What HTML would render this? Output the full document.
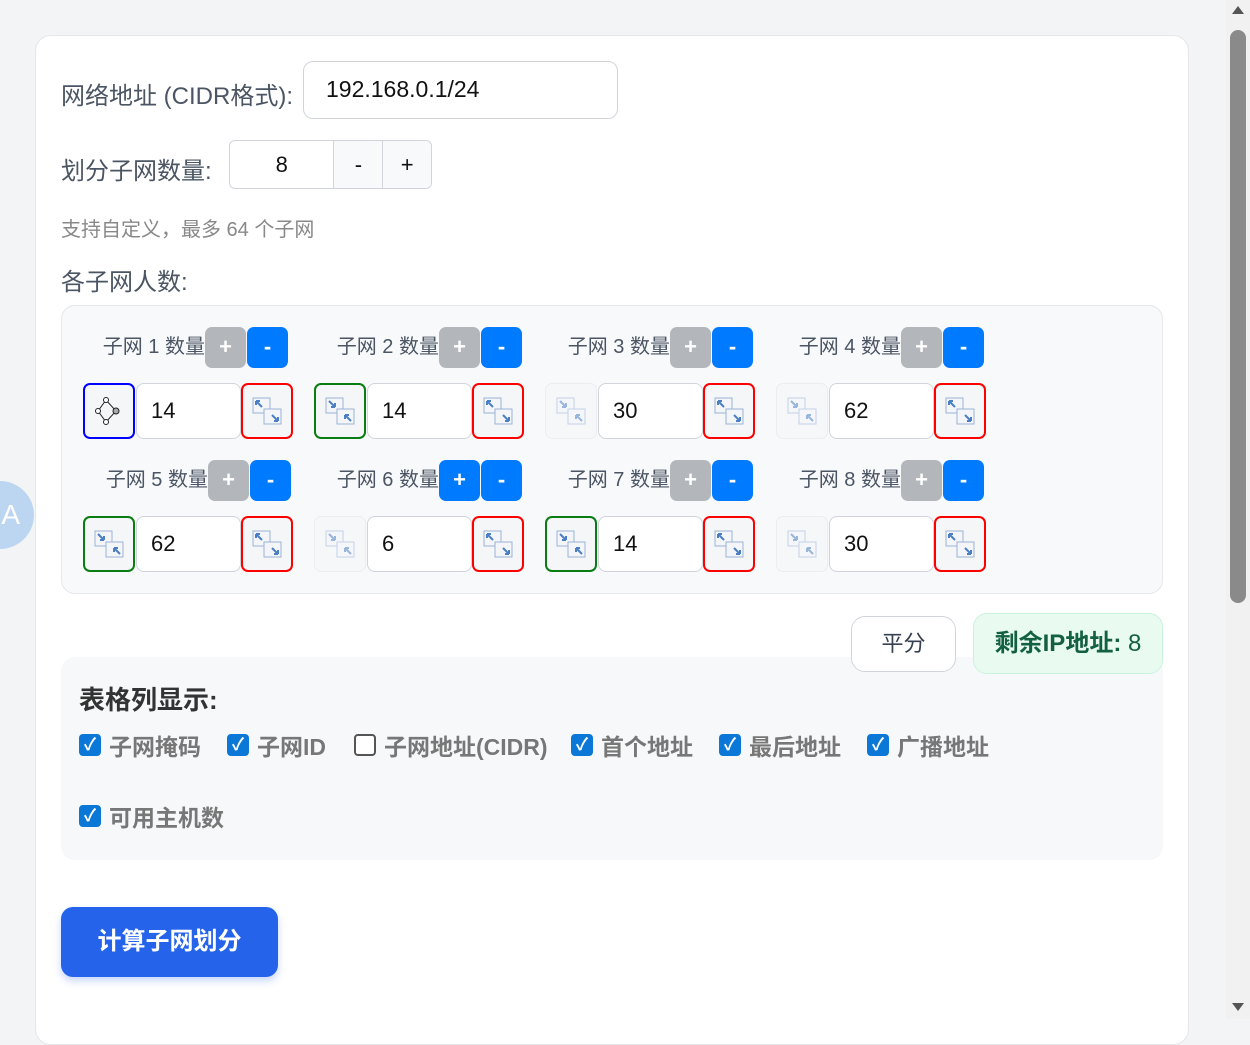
<!DOCTYPE html>
<html><head><meta charset="utf-8"><style>
*{box-sizing:border-box;margin:0;padding:0}
body{width:1250px;height:1019px;background:#f3f4f6;font-family:"Liberation Sans","Noto Sans CJK SC",sans-serif;position:relative;overflow:hidden;color:#4b5563}
.a{position:absolute}
.card{left:35px;top:35px;width:1154px;height:1010px;background:#fff;border:1px solid #e5e7eb;border-radius:16px}
.lbl{font-size:24px;color:#4b5563}
.inp{background:#fff;border:1px solid #d1d5db;border-radius:10px;font-size:23px;color:#111}
.panel{left:61px;top:305px;width:1102px;height:289px;background:#f8f9fb;border:1px solid #e5e7eb;border-radius:14px}
.gl{font-size:20px;color:#4b5563;width:125px;text-align:right;height:41px;line-height:41px;white-space:nowrap}
.bt{width:41px;height:41px;border-radius:7px;color:#fff;font-weight:bold;font-size:22px;text-align:center;line-height:40px}
.g{background:#b3b7bc}.b{background:#007bff}
.ib{width:52px;height:56px;border-radius:7px;background:#f5f6f8;display:flex;align-items:center;justify-content:center}
.fd{border:1px solid #e3e5e8;opacity:.55}
.gr{border:2px solid #0a7d12}.rd{border:2px solid #f00}.bl{border:2px solid #00f}
.vi{width:105px;height:56px;background:#fff;border:1px solid #d1d5db;border-radius:8px;font-size:22px;color:#111;line-height:54px;padding-left:14px}
.cb{font-size:23px;font-weight:bold;color:#777;display:flex;align-items:center;gap:8px}
.box{width:22px;height:22px;border-radius:4px;background:#0b78d8;color:#fff;font-size:17px;text-align:center;line-height:22px;font-weight:bold}
.ub{width:22px;height:22px;border-radius:4px;border:2px solid #555;background:#fff}
</style></head><body>
<div class="a card"></div>
<div class="a lbl" style="left:61px;top:76px">网络地址 (CIDR格式):</div>
<div class="a inp" style="left:303px;top:61px;width:315px;height:58px;padding:14px 0 0 22px">192.168.0.1/24</div>
<div class="a lbl" style="left:61px;top:151px">划分子网数量:</div>
<div class="a" style="left:229px;top:140px;width:203px;height:49px;border:1px solid #d1d5db;border-radius:6px;background:#fff;overflow:hidden;display:flex;font-size:22px;color:#111">
<div style="width:104px;text-align:center;line-height:47px">8</div>
<div style="width:49px;text-align:center;line-height:47px;background:#f8f9fa;border-left:1px solid #d1d5db">-</div>
<div style="width:49px;text-align:center;line-height:47px;background:#f8f9fa;border-left:1px solid #d1d5db">+</div></div>
<div class="a" style="left:61px;top:213px;font-size:20px;color:#888">支持自定义，最多 64 个子网</div>
<div class="a lbl" style="left:61px;top:262px">各子网人数:</div>
<div class="a panel"></div>

<svg width="0" height="0" style="position:absolute"><defs>
<g id="ic"><rect x="1" y="1" width="17" height="15" fill="#f3f5f8" stroke="#9bb4d6"/><rect x="12" y="12" width="17" height="15" fill="#f3f5f8" stroke="#9bb4d6"/><path d="M4 4l6 6M4 4v4M4 4h4M26 24l-6-6M26 24v-4M26 24h-4" stroke="#4a7fc4" stroke-width="2" fill="none"/></g>
<g id="ic2"><rect x="1" y="1" width="17" height="15" fill="#f3f5f8" stroke="#9bb4d6"/><rect x="12" y="12" width="17" height="15" fill="#f3f5f8" stroke="#9bb4d6"/><path d="M4 4l6 6M10 10v-4M10 10h-4M26 24l-6-6M20 18v4M20 18h4" stroke="#4a7fc4" stroke-width="2" fill="none"/></g>
</defs></svg>

<div class="a gl" style="left:80px;top:327px">子网 1 数量</div><div class="a bt g" style="left:205px;top:327px">+</div><div class="a bt b" style="left:247px;top:327px">-</div>
<div class="a ib bl" style="left:83px;top:383px"><svg width="30" height="30"><path d="M12 4L4 15l8 11 10-11z" fill="none" stroke="#222"/><circle cx="12" cy="4" r="2.5" fill="#fff" stroke="#222"/><circle cx="4" cy="15" r="2.5" fill="#fff" stroke="#222"/><circle cx="12" cy="26" r="2.5" fill="#fff" stroke="#222"/><circle cx="22" cy="15" r="3" fill="#aaa" stroke="#222"/></svg></div>
<div class="a vi" style="left:136px;top:383px">14</div>
<div class="a ib rd" style="left:241px;top:383px"><svg width="30" height="28"><use href="#ic"/></svg></div>

<div class="a gl" style="left:314px;top:327px">子网 2 数量</div><div class="a bt g" style="left:439px;top:327px">+</div><div class="a bt b" style="left:481px;top:327px">-</div>
<div class="a ib gr" style="left:314px;top:383px"><svg width="30" height="28"><use href="#ic2"/></svg></div>
<div class="a vi" style="left:367px;top:383px">14</div>
<div class="a ib rd" style="left:472px;top:383px"><svg width="30" height="28"><use href="#ic"/></svg></div>

<div class="a gl" style="left:545px;top:327px">子网 3 数量</div><div class="a bt g" style="left:670px;top:327px">+</div><div class="a bt b" style="left:712px;top:327px">-</div>
<div class="a ib fd" style="left:545px;top:383px"><svg width="30" height="28"><use href="#ic2"/></svg></div>
<div class="a vi" style="left:598px;top:383px">30</div>
<div class="a ib rd" style="left:703px;top:383px"><svg width="30" height="28"><use href="#ic"/></svg></div>

<div class="a gl" style="left:776px;top:327px">子网 4 数量</div><div class="a bt g" style="left:901px;top:327px">+</div><div class="a bt b" style="left:943px;top:327px">-</div>
<div class="a ib fd" style="left:776px;top:383px"><svg width="30" height="28"><use href="#ic2"/></svg></div>
<div class="a vi" style="left:829px;top:383px">62</div>
<div class="a ib rd" style="left:934px;top:383px"><svg width="30" height="28"><use href="#ic"/></svg></div>

<div class="a gl" style="left:83px;top:460px">子网 5 数量</div><div class="a bt g" style="left:208px;top:460px">+</div><div class="a bt b" style="left:250px;top:460px">-</div>
<div class="a ib gr" style="left:83px;top:516px"><svg width="30" height="28"><use href="#ic2"/></svg></div>
<div class="a vi" style="left:136px;top:516px">62</div>
<div class="a ib rd" style="left:241px;top:516px"><svg width="30" height="28"><use href="#ic"/></svg></div>

<div class="a gl" style="left:314px;top:460px">子网 6 数量</div><div class="a bt b" style="left:439px;top:460px">+</div><div class="a bt b" style="left:481px;top:460px">-</div>
<div class="a ib fd" style="left:314px;top:516px"><svg width="30" height="28"><use href="#ic2"/></svg></div>
<div class="a vi" style="left:367px;top:516px">6</div>
<div class="a ib rd" style="left:472px;top:516px"><svg width="30" height="28"><use href="#ic"/></svg></div>

<div class="a gl" style="left:545px;top:460px">子网 7 数量</div><div class="a bt g" style="left:670px;top:460px">+</div><div class="a bt b" style="left:712px;top:460px">-</div>
<div class="a ib gr" style="left:545px;top:516px"><svg width="30" height="28"><use href="#ic2"/></svg></div>
<div class="a vi" style="left:598px;top:516px">14</div>
<div class="a ib rd" style="left:703px;top:516px"><svg width="30" height="28"><use href="#ic"/></svg></div>

<div class="a gl" style="left:776px;top:460px">子网 8 数量</div><div class="a bt g" style="left:901px;top:460px">+</div><div class="a bt b" style="left:943px;top:460px">-</div>
<div class="a ib fd" style="left:776px;top:516px"><svg width="30" height="28"><use href="#ic2"/></svg></div>
<div class="a vi" style="left:829px;top:516px">30</div>
<div class="a ib rd" style="left:934px;top:516px"><svg width="30" height="28"><use href="#ic"/></svg></div>

<div class="a" style="left:61px;top:657px;width:1102px;height:203px;background:#f7f8fa;border-radius:14px"></div>
<div class="a" style="left:851px;top:616px;width:105px;height:56px;background:#fff;border:1px solid #d1d5db;border-radius:14px;text-align:center;line-height:54px;font-size:22px;color:#374151">平分</div>
<div class="a" style="left:973px;top:613px;width:190px;height:61px;background:#e9fbf1;border:1px solid #c9f3dc;border-radius:14px;text-align:center;line-height:60px;font-size:24px;font-weight:bold;color:#136140">剩余IP地址: <span style="font-weight:normal">8</span></div>
<div class="a" style="left:79px;top:680px;font-size:26px;font-weight:bold;color:#333">表格列显示:</div>
<div class="a cb" style="left:79px;top:728px"><div class="box">✓</div>子网掩码</div>
<div class="a cb" style="left:227px;top:728px"><div class="box">✓</div>子网ID</div>
<div class="a cb" style="left:354px;top:728px"><div class="ub"></div>子网地址(CIDR)</div>
<div class="a cb" style="left:571px;top:728px"><div class="box">✓</div>首个地址</div>
<div class="a cb" style="left:719px;top:728px"><div class="box">✓</div>最后地址</div>
<div class="a cb" style="left:867px;top:728px"><div class="box">✓</div>广播地址</div>
<div class="a cb" style="left:79px;top:799px"><div class="box">✓</div>可用主机数</div>
<div class="a" style="left:61px;top:907px;width:217px;height:70px;background:#2563eb;border-radius:12px;color:#fff;font-size:24px;font-weight:bold;text-align:center;line-height:70px;box-shadow:0 4px 8px rgba(37,99,235,.25)">计算子网划分</div>

<div class="a" style="left:-34px;top:481px;width:68px;height:68px;border-radius:50%;background:#bcd6f1;color:#fff;font-size:28px;line-height:68px;text-align:right;padding-right:14px">A</div>
<div class="a" style="left:1226px;top:0;width:24px;height:1019px;background:#f1f1f1"></div>
<div class="a" style="left:1230px;top:30px;width:16px;height:573px;background:#8a8a8a;border-radius:8px"></div>
<div class="a" style="left:1232px;top:6px;width:0;height:0;border-left:6px solid transparent;border-right:6px solid transparent;border-bottom:8px solid #555"></div>
<div class="a" style="left:1232px;top:1003px;width:0;height:0;border-left:6px solid transparent;border-right:6px solid transparent;border-top:8px solid #555"></div>
</body></html>
